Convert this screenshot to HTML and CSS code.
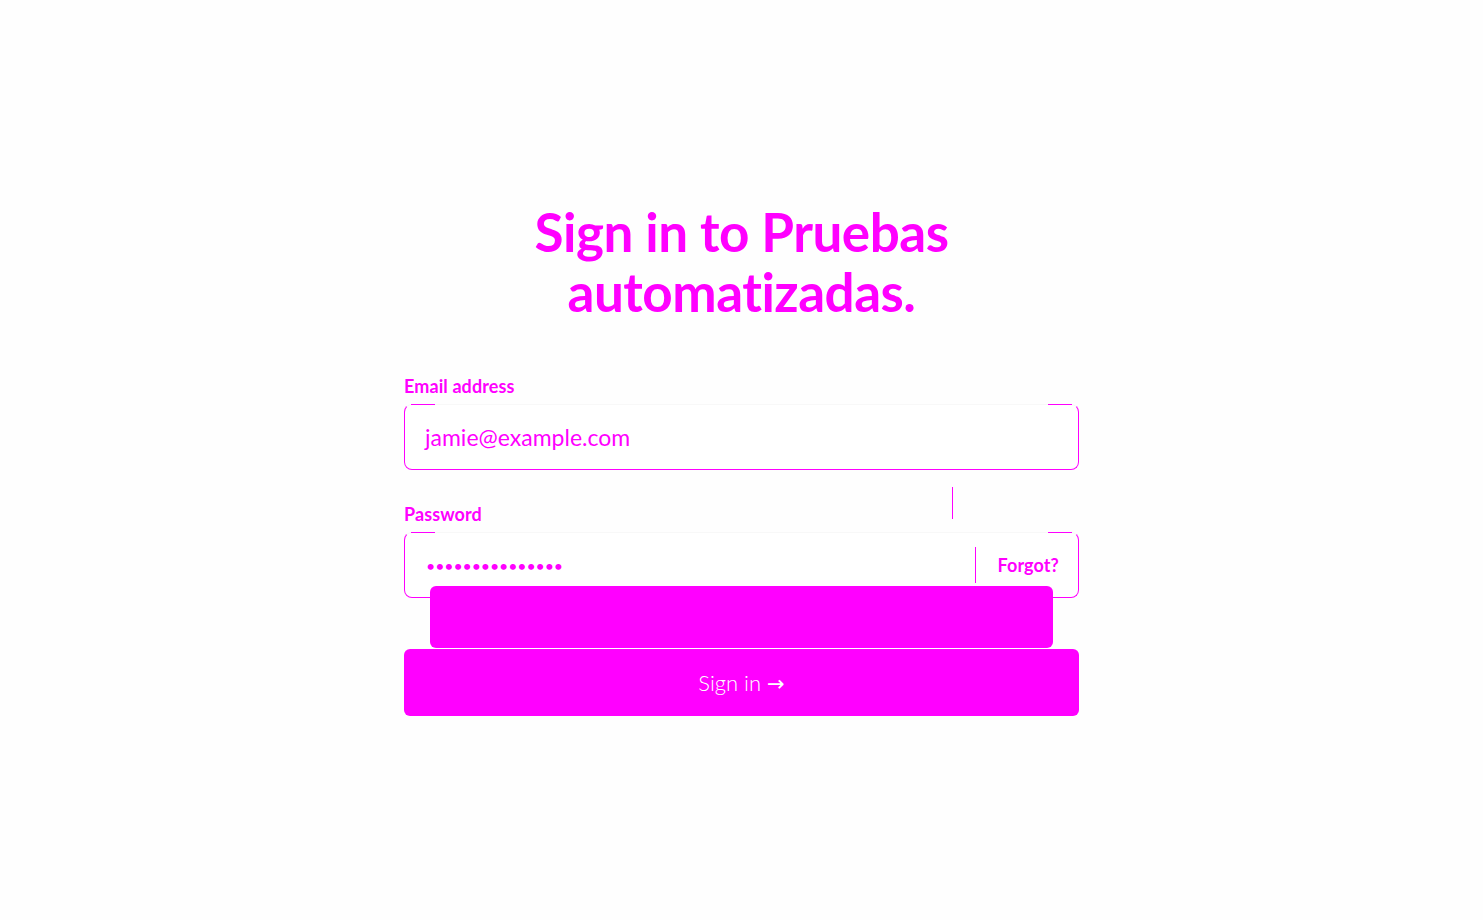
FILE: index.html
```html
<!DOCTYPE html>
<html lang="en">
<head>
<meta charset="utf-8">
<title>Sign in</title>
<link rel="stylesheet" href="styles.css">
</head>
<body>
<main class="page">
  <section class="card">
    <h1 class="title">Sign in to Pruebas<br>automatizadas.</h1>
    <form class="form">
      <div class="field">
        <label class="label" for="email">Email address</label>
        <div class="input">
          <span class="value">jamie@example.com</span>
        </div>
      </div>
      <span class="tick"></span>
      <div class="field field-pass">
        <label class="label" for="pw">Password</label>
        <div class="input">
          <span class="dots">•••••••••••••••</span>
          <span class="divider"></span>
          <span class="forgot">Forgot?</span>
        </div>
      </div>
      <span class="ghost"></span>
      <button type="button" class="submit">Sign in <span class="arrow">→</span></button>
    </form>
  </section>
</main>
</body>
</html>
```
FILE: styles.css
```css
* { box-sizing: border-box; }
html, body { margin: 0; padding: 0; }
body {
  background: #fefefe;
  font-family: Lato, "Noto Sans", sans-serif;
  color: #ff00ff;
}
.page {
  min-height: 100vh;
  display: flex;
  align-items: center;
  justify-content: center;
}
.card {
  width: 675px;
  display: flex;
  flex-direction: column;
  margin-top: -2px;
}
.title {
  margin: 0;
  text-align: center;
  font-size: 53px;
  line-height: 60px;
  font-weight: 700;
  color: #ff00ff;
  letter-spacing: -0.5px;
}
.form {
  position: relative;
  margin-top: 54px;
  display: flex;
  flex-direction: column;
}
.field { display: flex; flex-direction: column; gap: 8px; }
.field-pass { margin-top: 34px; }
.label {
  font-size: 18px;
  line-height: 20px;
  font-weight: 700;
  letter-spacing: 0.1px;
}
.input {
  position: relative;
  height: 66px;
  border: 1px solid #ff00ff;
  border-top-color: #f8f8f8;
  border-radius: 8px;
  display: flex;
  align-items: center;
  padding: 0 19px 0 20px;
  background: #fff;
}
.input::before, .input::after {
  content: "";
  position: absolute;
  top: -1px;
  width: 24px;
  height: 1px;
  background: #ff00ff;
}
.input::before { left: 6px; }
.input::after { right: 6px; }
.value {
  font-size: 23px;
  font-weight: 400;
}
.dots {
  flex: 1;
  font-size: 16px;
  letter-spacing: -0.15px;
  padding-left: 1px;
}
.divider {
  width: 1px;
  height: 36px;
  background: #ff00ff;
}
.forgot {
  margin-left: 21px;
  font-size: 18px;
  font-weight: 700;
  letter-spacing: 0.1px;
}
.tick {
  position: absolute;
  left: 548px;
  top: 111px;
  width: 1px;
  height: 32px;
  background: #ff00ff;
}
.ghost {
  position: absolute;
  left: 26px;
  right: 26px;
  top: 210px;
  height: 62px;
  background: #ff00ff;
  border-radius: 6px;
}
.submit {
  margin-top: 51px;
  height: 67px;
  border: 0;
  border-radius: 6px;
  background: #ff00ff;
  color: #fff;
  font-family: Lato, sans-serif;
  font-size: 22px;
  font-weight: 300;
  cursor: pointer;
}
.arrow {
  font-family: "DejaVu Sans", sans-serif;
  font-size: 21px;
  font-weight: 400;
}
```
